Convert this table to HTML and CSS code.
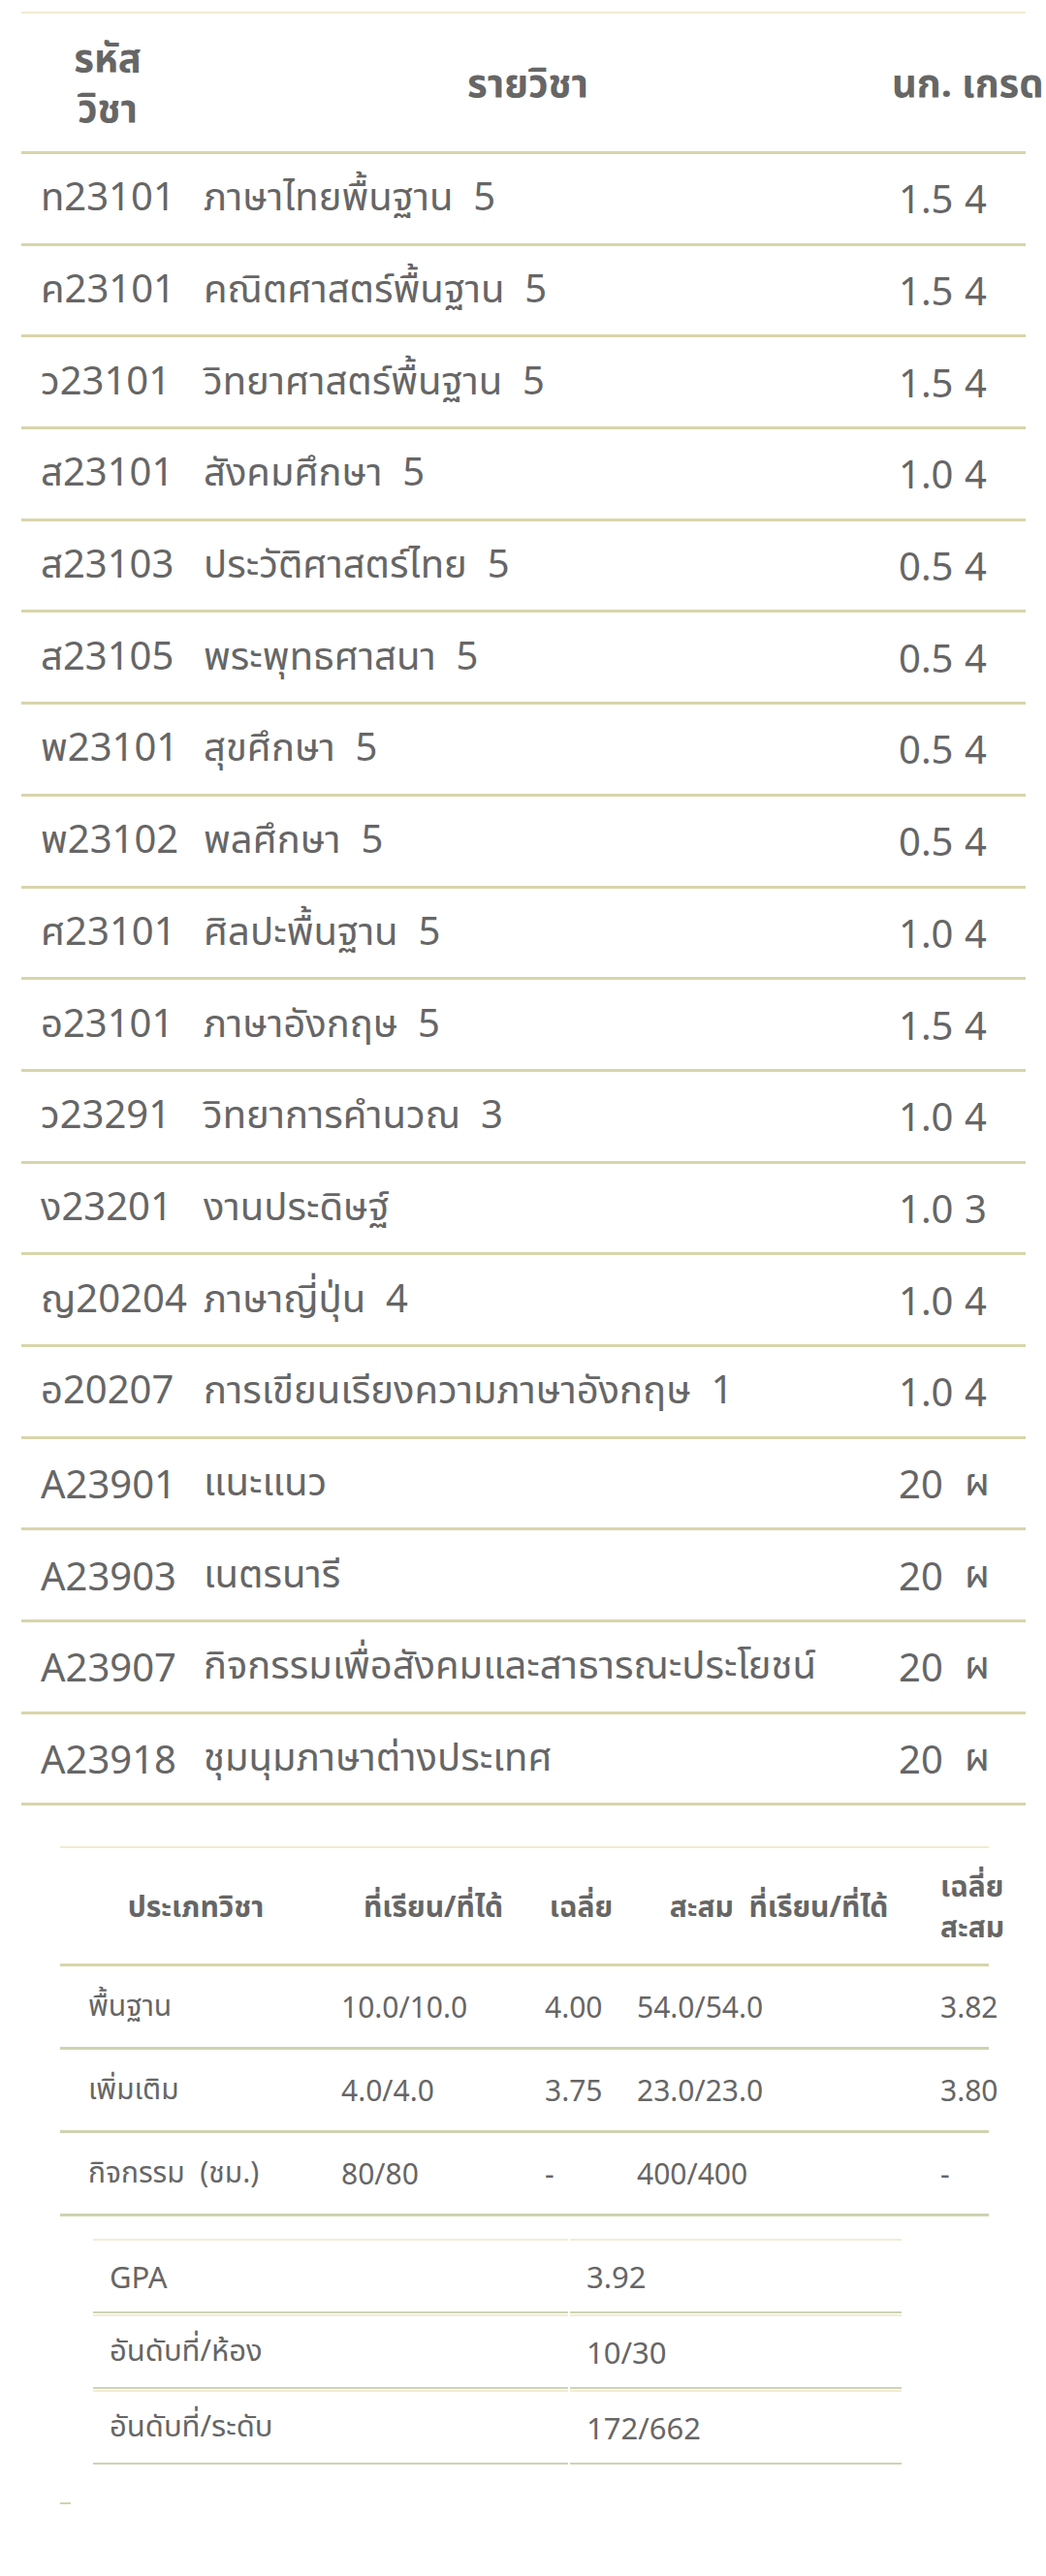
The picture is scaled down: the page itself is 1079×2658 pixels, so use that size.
FILE: index.html
```html
<!DOCTYPE html>
<html lang="th">
<head>
    <meta charset="UTF-8">
    <meta name="viewport" content="width=device-width, initial-scale=1.0">
    <title>ผลการเรียน</title>
    <link rel="stylesheet" href="styles.css">
</head>
<body>
<div class="page">

    <table class="grades">
        <colgroup>
            <col class="cCode"><col class="cName"><col class="cCredit"><col class="cGrade">
        </colgroup>
        <thead>
            <tr>
                <th>รหัส<br>วิชา</th>
                <th class="nameHead">รายวิชา</th>
                <th>นก.</th>
                <th class="gradeHead">เกรด</th>
            </tr>
        </thead>
        <tbody>
            <tr><td class="code">ท23101</td><td class="name">ภาษาไทยพื้นฐาน  5</td><td>1.5</td><td>4</td></tr>
            <tr><td class="code">ค23101</td><td class="name">คณิตศาสตร์พื้นฐาน  5</td><td>1.5</td><td>4</td></tr>
            <tr><td class="code">ว23101</td><td class="name">วิทยาศาสตร์พื้นฐาน  5</td><td>1.5</td><td>4</td></tr>
            <tr><td class="code">ส23101</td><td class="name">สังคมศึกษา  5</td><td>1.0</td><td>4</td></tr>
            <tr><td class="code">ส23103</td><td class="name">ประวัติศาสตร์ไทย  5</td><td>0.5</td><td>4</td></tr>
            <tr><td class="code">ส23105</td><td class="name">พระพุทธศาสนา  5</td><td>0.5</td><td>4</td></tr>
            <tr><td class="code">พ23101</td><td class="name">สุขศึกษา  5</td><td>0.5</td><td>4</td></tr>
            <tr><td class="code">พ23102</td><td class="name">พลศึกษา  5</td><td>0.5</td><td>4</td></tr>
            <tr><td class="code">ศ23101</td><td class="name">ศิลปะพื้นฐาน  5</td><td>1.0</td><td>4</td></tr>
            <tr><td class="code">อ23101</td><td class="name">ภาษาอังกฤษ  5</td><td>1.5</td><td>4</td></tr>
            <tr><td class="code">ว23291</td><td class="name">วิทยาการคำนวณ  3</td><td>1.0</td><td>4</td></tr>
            <tr><td class="code">ง23201</td><td class="name">งานประดิษฐ์</td><td>1.0</td><td>3</td></tr>
            <tr><td class="code">ญ20204</td><td class="name">ภาษาญี่ปุ่น  4</td><td>1.0</td><td>4</td></tr>
            <tr><td class="code">อ20207</td><td class="name">การเขียนเรียงความภาษาอังกฤษ  1</td><td>1.0</td><td>4</td></tr>
            <tr><td class="code">A23901</td><td class="name">แนะแนว</td><td>20</td><td>ผ</td></tr>
            <tr><td class="code">A23903</td><td class="name">เนตรนารี</td><td>20</td><td>ผ</td></tr>
            <tr><td class="code">A23907</td><td class="name">กิจกรรมเพื่อสังคมและสาธารณะประโยชน์</td><td>20</td><td>ผ</td></tr>
            <tr><td class="code">A23918</td><td class="name">ชุมนุมภาษาต่างประเทศ</td><td>20</td><td>ผ</td></tr>
        </tbody>
    </table>

    <table class="summary">
        <colgroup>
            <col class="sType"><col class="sTerm"><col class="sAvg"><col class="sTotal"><col class="sTotalAvg">
        </colgroup>
        <thead>
            <tr>
                <th>ประเภทวิชา</th>
                <th>ที่เรียน/ที่ได้</th>
                <th>เฉลี่ย</th>
                <th>สะสม  ที่เรียน/ที่ได้</th>
                <th>เฉลี่ย<br>สะสม</th>
            </tr>
        </thead>
        <tbody>
            <tr><td class="type">พื้นฐาน</td><td>10.0/10.0</td><td>4.00</td><td>54.0/54.0</td><td>3.82</td></tr>
            <tr><td class="type">เพิ่มเติม</td><td>4.0/4.0</td><td>3.75</td><td>23.0/23.0</td><td>3.80</td></tr>
            <tr><td class="type">กิจกรรม  (ชม.)</td><td>80/80</td><td>-</td><td>400/400</td><td>-</td></tr>
        </tbody>
    </table>

    <table class="gpa">
        <tr><td>GPA</td><td>3.92</td></tr>
        <tr><td>อันดับที่/ห้อง</td><td>10/30</td></tr>
        <tr><td>อันดับที่/ระดับ</td><td>172/662</td></tr>
    </table>

    <div class="endMark"></div>
</div>
</body>
</html>
```

FILE: styles.css
```css
*{
    margin: 0;
    padding: 0;
    box-sizing: border-box;
}
body{
    background-color: #fff;
    color: #666;
    font-family: "Noto Sans", "Noto Sans Thai", "Leelawadee UI", Tahoma, sans-serif;
}
.page{
    padding: 12px 21px 0 22px;
    display: flex;
    flex-direction: column;
    align-items: flex-start;
}
table{
    border-collapse: separate;
    border-spacing: 0;
    table-layout: fixed;
}
td, th{
    white-space: pre;
    vertical-align: middle;
}

/* main table */
.grades{
    width: 1036px;
    font-size: 40px;
    border-top: 2px solid #f1ecd2;
}
.cCode{ width: 178px; }
.cName{ width: 717px; }
.cCredit{ width: 68px; }
.cGrade{ width: 73px; }
.grades th{
    height: 145px;
    font-weight: bold;
    font-size: 40px;
    line-height: 52px;
    border-bottom: 3px solid #d8d5ab;
}
.grades th.nameHead{
    padding-right: 28px;
}
.grades th.gradeHead{
    text-align: left;
    padding-left: 7px;
}
.grades td{
    height: 94.7px;
    padding: 0 10px;
    border-bottom: 3px solid #d8d5ab;
}
.grades td.code{
    padding-left: 20px;
}

/* summary table */
.summary{
    width: 958px;
    margin: 42px 0 0 40px;
    font-size: 30px;
    border-top: 2px solid #f1ecd2;
}
.sType{ width: 280px; }
.sTerm{ width: 210px; }
.sAvg{ width: 95px; }
.sTotal{ width: 313px; }
.sTotalAvg{ width: 60px; }
.summary th{
    height: 122px;
    padding: 0 10px;
    font-weight: bold;
    line-height: 42px;
    border-bottom: 3px solid #d8d5ab;
}
.summary td{
    height: 86px;
    padding: 0 10px;
    text-align: left;
    border-bottom: 3px solid #cfd3b0;
}
.summary td.type{
    padding-left: 29px;
}

/* gpa table */
.gpa{
    width: 838px;
    margin: 22px 0 0 72px;
    font-size: 31px;
    border-spacing: 2px 1px;
}
.gpa td{
    height: 77px;
    padding-left: 17px;
    border-top: 2px solid #f3ecd3;
    border-bottom: 2px solid #ccd4b4;
}
.gpa td:first-child{
    width: 490px;
}

.endMark{
    width: 11px;
    height: 2px;
    margin: 38px 0 0 40px;
    background-color: #cfd3b0;
}
```
